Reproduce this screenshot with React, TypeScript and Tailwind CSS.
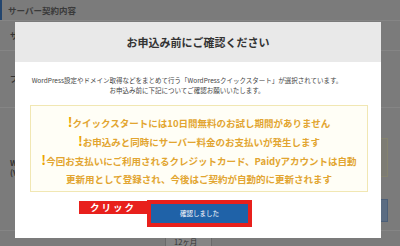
export default function App() {
  return (
    <div className="relative w-[400px] h-[246px] overflow-hidden bg-[#7b7b7b] font-['Noto_Sans_CJK_JP',sans-serif]">
      {/* page behind the overlay */}
      <div className="flex flex-col">
        <div className="h-[20px] flex items-center border-l-2 border-[#23456e] pl-[6px] text-[8.5px] font-bold text-[#3a3a3a]">
          サーバー契約内容
        </div>
        <div className="h-[30px] border-t border-[#858585] flex items-center pl-[10px] text-[8px] font-bold text-[#333]">
          サ
        </div>
        <div className="h-[57px] border-t border-[#858585] flex items-center pl-[10px] text-[8px] font-bold text-[#333]">
          プ
        </div>
        <div className="h-[123px] border-t border-[#858585] flex">
          <div className="pl-[10px] pt-[50px] text-[8px] font-bold leading-[10px] text-[#333]">
            <div>W</div>
            <div>(V</div>
          </div>
          <div className="ml-auto mr-[12px] w-[60px] flex flex-col items-end pt-[30px]">
            <div className="w-[60px] h-[39px] bg-[#7d7c74] border border-[#84826f]" />
            <div className="mt-[22px] w-[60px] h-[23px] bg-[#5b6c82] border border-[#4c5f78]" />
          </div>
        </div>
        <div className="h-[16px] border-t border-[#858585] flex items-end">
          <div className="ml-[165px] w-[47px] h-[9px] bg-[#858585] border-x border-[#6a6a6a] pl-[8px] text-[7.5px] leading-[10px] text-[#333]">
            12ヶ月
          </div>
        </div>
      </div>

      {/* modal */}
      <div className="absolute left-[15px] top-[22px] w-[366px] h-[216px] bg-white flex flex-col">
        <div className="h-[40px] bg-[#e9e9e9] flex items-center justify-center text-[11px] font-bold text-[#333]">
          お申込み前にご確認ください
        </div>
        <div className="pt-[13px] pr-[22px] text-center text-[6.5px] leading-[10px] text-[#444]">
          <div>WordPress設定やドメイン取得などをまとめて行う「WordPressクイックスタート」が選択されています。</div>
          <div>お申込み前に下記についてご確認お願いいたします。</div>
        </div>
        <div className="mt-[10px] ml-[15px] mr-[13px] h-[87px] border border-[#f1e7b3] bg-[#fffef6] pt-[7px] text-center text-[9.5px] font-bold leading-[18px] text-[#e2a530]">
          <div><span className="text-[13px] text-[#eca400]">!</span>クイックスタートには10日間無料のお試し期間がありません</div>
          <div><span className="text-[13px] text-[#eca400]">!</span>お申込みと同時にサーバー料金のお支払いが発生します</div>
          <div><span className="text-[13px] text-[#eca400]">!</span>今回お支払いにご利用されるクレジットカード、Paidyアカウントは自動</div>
          <div>更新用として登録され、今後はご契約が自動的に更新されます</div>
        </div>
        <div className="mt-[8px] pl-[64px] flex items-start">
          <div className="mt-[1px] w-[68px] h-[13px] bg-[#e8201c] flex items-center justify-center text-[9.5px] font-bold tracking-[2px] text-white">
            クリック
          </div>
          <div className="w-[105px] h-[27px] border-4 border-[#e8201c] bg-[#1f62a8] flex items-center justify-center text-[6.5px] text-white">
            確認しました
          </div>
        </div>
      </div>
    </div>
  );
}
